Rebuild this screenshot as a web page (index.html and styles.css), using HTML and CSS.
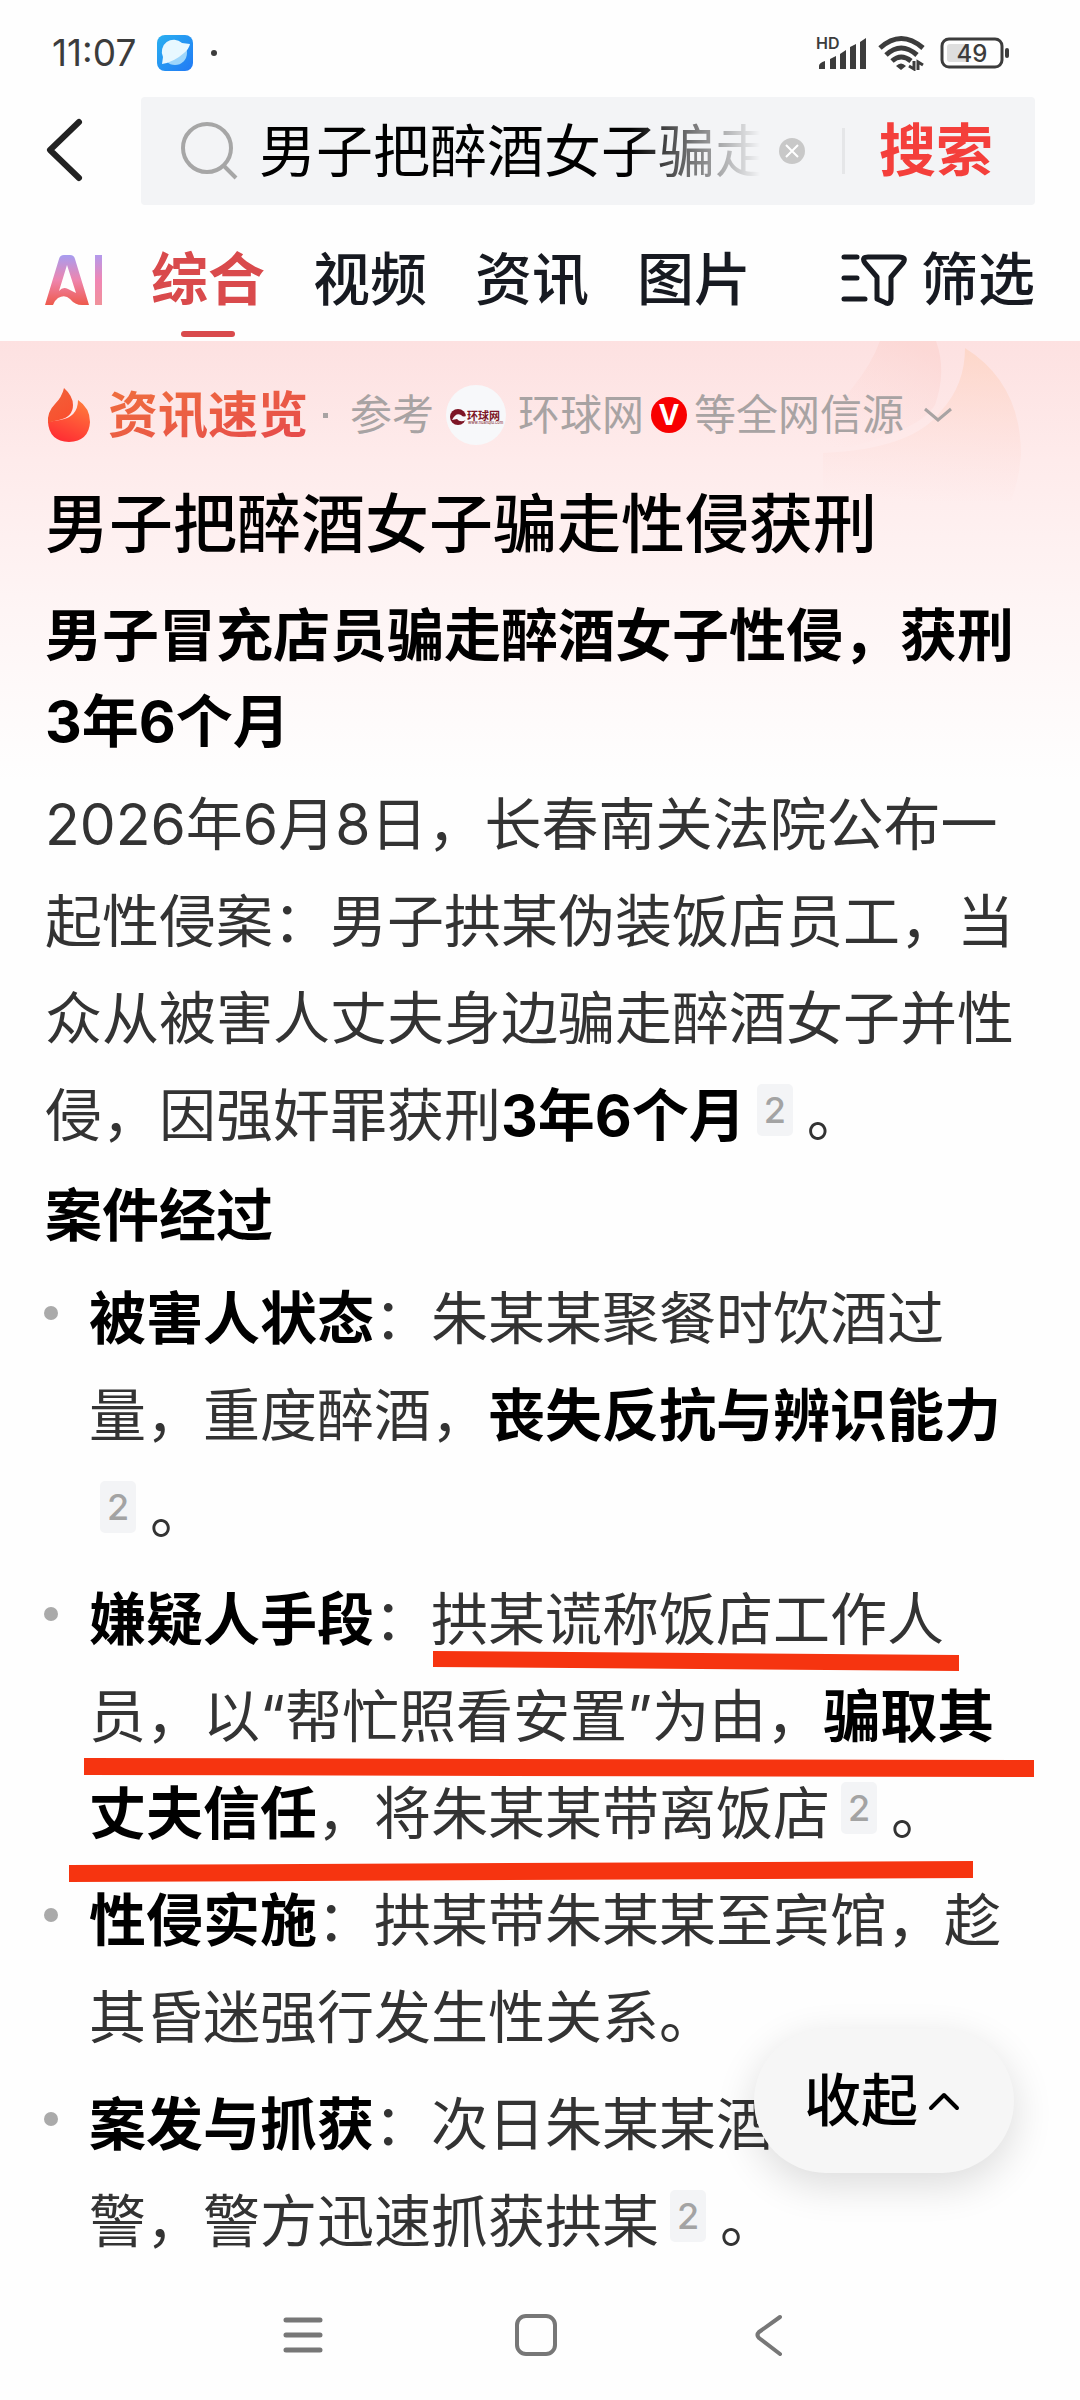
FILE: index.html
```html
<!DOCTYPE html>
<html lang="zh-CN">
<head>
    <meta charset="UTF-8">
    <meta name="viewport" content="width=device-width, initial-scale=1.0">
    <title>搜索结果</title>
    <link rel="stylesheet" href="styles.css">
</head>
<body>
    <div class="status-bar">
        <span class="time">11:07</span>
        <svg class="app-icon" viewBox="0 0 36 36" width="36" height="36">
            <defs>
                <linearGradient id="appBg" x1="0" y1="0" x2="1" y2="1">
                    <stop offset="0" stop-color="#2ab0f0"/>
                    <stop offset="1" stop-color="#2079f5"/>
                </linearGradient>
            </defs>
            <rect width="36" height="36" rx="8" fill="url(#appBg)"/>
            <circle cx="18" cy="18" r="12" fill="#9dd6fb"/>
            <path d="M6 22A12 12 0 0 1 25 8L33 9Q32 14 27 18Q17 27 5 29Z" fill="#e8f8ff"/>
        </svg>
        <span class="dot"></span>
        <svg class="signal" viewBox="0 0 52 34" width="52" height="34" fill="#3c3c3c">
            <text x="0" y="13" class="hd">HD</text>
            <path d="M3 33V30Q3 27 9 25V33ZM14 33V23L20 20V33ZM24 33V18L30 14V33ZM34 33V11L40 8V33ZM44 33V6L50 2V33Z"/>
        </svg>
        <svg class="wifi" viewBox="0 0 48 36" width="48" height="36" fill="none" stroke="#3c3c3c" stroke-width="5">
            <path d="M2 13Q23-6 45 13"/>
            <path d="M8 20Q23 6 39 20"/>
            <path d="M14 26Q23 18 33 26"/>
            <path d="M18 31Q23 26 28 31L23 35Z" fill="#3c3c3c" stroke="none"/>
            <path d="M36 26V34L31 31M40 35V27L45 30" stroke-width="3"/>
        </svg>
        <svg class="battery" viewBox="0 0 70 32" width="70" height="32">
            <rect x="2" y="2" width="60" height="28" rx="7" fill="none" stroke="#3c3c3c" stroke-width="3"/>
            <rect x="7" y="7" width="22" height="18" rx="3" fill="#dedede"/>
            <rect x="65" y="11" width="4" height="10" rx="2" fill="#3c3c3c"/>
            <text x="32" y="25" text-anchor="middle" class="level">49</text>
        </svg>
    </div>

    <header class="search-header">
        <button class="back" aria-label="返回">
            <svg viewBox="0 0 40 68" width="40" height="68" fill="none" stroke="#222" stroke-width="6" stroke-linecap="round" stroke-linejoin="round">
                <path d="M34 5L5 33L34 61"/>
            </svg>
        </button>
        <form class="search-box">
            <svg viewBox="0 0 58 60" width="58" height="60" fill="none" stroke="#a6a6a6" stroke-width="4">
                <circle cx="26" cy="27" r="24"/>
                <path d="M43 45L55 57"/>
            </svg>
            <input class="search-input" type="text" aria-label="搜索内容" value="男子把醉酒女子骗走性侵获刑">
            <button class="clear" type="button" aria-label="清除">
                <svg viewBox="0 0 28 28" width="28" height="28">
                    <circle cx="14" cy="14" r="13" fill="#c8c8c8"/>
                    <path d="M8 8L20 20M20 8L8 20" stroke="#fff" stroke-width="2"/>
                </svg>
            </button>
            <span class="divider"></span>
            <button class="search-btn" type="button">搜索</button>
        </form>
    </header>

    <nav class="tabs">
        <a href="#" class="tab-ai" aria-label="AI">
            <svg viewBox="0 0 58 50" width="58" height="50">
                <defs>
                    <linearGradient id="aiFill" x1="0" y1="0" x2="0" y2="1">
                        <stop offset="0" stop-color="#a79df0"/>
                        <stop offset="0.5" stop-color="#ee85ae"/>
                        <stop offset="1" stop-color="#ee5a4c"/>
                    </linearGradient>
                    <linearGradient id="aiBar" x1="0" y1="0" x2="0" y2="1">
                        <stop offset="0" stop-color="#b39aec"/>
                        <stop offset="0.5" stop-color="#f086b4"/>
                        <stop offset="1" stop-color="#f0929a"/>
                    </linearGradient>
                </defs>
                <path d="M0 50L14 4Q15 0 19 0H25Q29 0 30 4L44 50H37Q30 50 25 44Q20 39 13 43Q9 46 8 50ZM14 36Q18 31 23 34L31 38L22 10Z" fill="url(#aiFill)" fill-rule="evenodd"/>
                <path d="M50 0H57V50H50Z" fill="url(#aiBar)"/>
            </svg>
        </a>
        <a href="#" class="tab active">综合</a>
        <a href="#" class="tab">视频</a>
        <a href="#" class="tab">资讯</a>
        <a href="#" class="tab">图片</a>
        <button class="filter">
            <svg viewBox="0 0 66 54" width="66" height="54" fill="none" stroke="#171a21" stroke-width="5" stroke-linecap="round" stroke-linejoin="round">
                <path d="M3 4H16M3 25H16M3 46H24"/>
                <path d="M27 4H58Q66 4 62 10L50 24V46Q49 53 43 49L36 46V24L24 10Q20 4 27 4Z"/>
            </svg>
            筛选
        </button>
    </nav>

    <main class="card">
        <svg class="flame-bg" viewBox="0 0 200 160" width="200" height="160">
            <defs>
                <linearGradient id="bgLeft" x1="0.7" y1="0" x2="0.2" y2="1">
                    <stop offset="0" stop-color="#fbcfca" stop-opacity="0.5"/>
                    <stop offset="1" stop-color="#fddcda" stop-opacity="0"/>
                </linearGradient>
                <linearGradient id="bgRight" x1="0.5" y1="0" x2="0.4" y2="1">
                    <stop offset="0" stop-color="#fdd3c0" stop-opacity="0.7"/>
                    <stop offset="1" stop-color="#fdd9d8" stop-opacity="0"/>
                </linearGradient>
            </defs>
            <path d="M57 0H113Q124 30 112 64Q96 92 0 112Q6 76 30 46Q48 24 57 0Z" fill="url(#bgLeft)"/>
            <path d="M142 7Q198 42 198 114Q196 140 188 160H0V112Q90 108 118 70Q142 44 142 7Z" fill="url(#bgRight)"/>
        </svg>

        <div class="source">
            <svg viewBox="0 0 44 56" width="44" height="56">
                <defs>
                    <linearGradient id="fireA" x1="0" y1="0" x2="0.4" y2="1">
                        <stop offset="0" stop-color="#f0633a"/>
                        <stop offset="1" stop-color="#f9502f"/>
                    </linearGradient>
                    <linearGradient id="fireB" x1="0.8" y1="0" x2="0.4" y2="1">
                        <stop offset="0" stop-color="#ff7d3c"/>
                        <stop offset="1" stop-color="#ff2e33"/>
                    </linearGradient>
                </defs>
                <path d="M31 13Q43 21 43 35Q42 54 22 55Q2 54 1 35Q6 34 13 33Q31 30 31 13Z" fill="url(#fireB)"/>
                <path d="M17 1Q26 9 26 18Q26 30 12 33Q6 34 1 36Q0 25 8 17Q15 10 17 1Z" fill="url(#fireA)"/>
            </svg>
            <strong class="source-name">资讯速览</strong>
            <span class="sep"></span>
            <span>参考</span>
            <svg class="logo" viewBox="0 0 60 60" width="60" height="60">
                <circle cx="30" cy="30" r="30" fill="#f7f8fa"/>
                <circle cx="12" cy="32" r="8" fill="#7d1626"/>
                <path d="M6 35Q10 27 15 30Q18 33 21 30L20 35Q14 38 11 34Z" fill="#f7f8fa"/>
                <text x="21" y="35" class="logo-name">环球网</text>
                <text x="22" y="39" class="logo-url">www.huanqiu.com</text>
            </svg>
            <span>环球网</span>
            <span class="verified">V</span>
            <span>等全网信源</span>
            <svg class="more" viewBox="0 0 28 16" width="28" height="16" fill="none" stroke="#a8a3a3" stroke-width="3">
                <path d="M1 2L14 13L27 2"/>
            </svg>
        </div>

        <h1>男子把醉酒女子骗走性侵获刑</h1>
        <h2>男子冒充店员骗走醉酒女子性侵，获刑3年6个月</h2>
        <p>2026年6月8日，长春南关法院公布一起性侵案：男子拱某伪装饭店员工，当众从被害人丈夫身边骗走醉酒女子并性侵，因强奸罪获刑<b>3年6个月</b><a href="#" class="ref">2</a>。</p>
        <h3>案件经过</h3>
        <ul>
            <li><b>被害人状态</b>：朱某某聚餐时饮酒过量，重度醉酒，<b>丧失反抗与辨识能力</b><a href="#" class="ref">2</a>。</li>
            <li><b>嫌疑人手段</b>：拱某谎称饭店工作人员，以“帮忙照看安置”为由，<b>骗取其丈夫信任</b>，将朱某某带离饭店<a href="#" class="ref">2</a>。
                <!-- 手绘红色下划线 -->
                <svg class="marks" viewBox="0 0 1080 320" preserveAspectRatio="none" fill="#f63410">
                    <path d="M433 80L959 84V100L433 96Z"/>
                    <path d="M84 187L1034 189V206L84 204Z"/>
                    <path d="M69 294L973 290V307L69 311Z"/>
                </svg>
            </li>
            <li><b>性侵实施</b>：拱某带朱某某至宾馆，趁其昏迷强行发生性关系。</li>
            <li><b>案发与抓获</b>：次日朱某某酒醒后报警，警方迅速抓获拱某<a href="#" class="ref">2</a>。</li>
        </ul>
        <button class="collapse">
            收起
            <svg viewBox="0 0 32 20" width="32" height="20" fill="none" stroke="#000" stroke-width="4" stroke-linecap="round" stroke-linejoin="round">
                <path d="M3 17L16 4L29 17"/>
            </svg>
        </button>
    </main>

    <footer class="system-nav">
        <button aria-label="菜单">
            <svg viewBox="0 0 44 44" width="44" height="44" fill="none" stroke="#777" stroke-width="5" stroke-linecap="round">
                <path d="M5 7H39M5 22H39M5 37H39"/>
            </svg>
        </button>
        <button aria-label="主页">
            <svg viewBox="0 0 44 44" width="44" height="44" fill="none" stroke="#777" stroke-width="4">
                <rect x="3" y="3" width="38" height="38" rx="9"/>
            </svg>
        </button>
        <button aria-label="返回上一页">
            <svg viewBox="0 0 44 44" width="44" height="44" fill="none" stroke="#777" stroke-width="4" stroke-linecap="round" stroke-linejoin="round">
                <path d="M33 4L12 19Q9 22 12 25L33 41"/>
            </svg>
        </button>
    </footer>
</body>
</html>
```

FILE: styles.css
```css
* {
    box-sizing: border-box;
}
body {
    margin: 0;
    min-height: 100vh;
    display: flex;
    flex-direction: column;
    background: #fefefe;
    color: #333;
    font-family: Inter, "Noto Sans CJK SC", sans-serif;
    font-size: 57px;
}
svg {
    display: block;
    flex: none;
}
a {
    color: inherit;
    text-decoration: none;
}
button {
    padding: 0;
    border: none;
    background: none;
    color: inherit;
    font: inherit;
    cursor: pointer;
}
.status-bar {
    display: flex;
    align-items: center;
    height: 97px;
    padding: 8px 70px 0 52px;
}
.time {
    width: 89px;
    color: #3c3c3c;
    font-size: 37px;
    line-height: 44px;
}
.app-icon {
    margin-left: 16px;
}
.dot {
    width: 6px;
    height: 6px;
    margin-left: 18px;
    border-radius: 50%;
    background: #3c3c3c;
}
.signal {
    margin-left: auto;
}
.hd {
    font-size: 16px;
    font-weight: 600;
}
.wifi {
    margin: 0 14px 0 10px;
}
.level {
    fill: #3c3c3c;
    font-size: 24px;
    font-weight: 500;
}
.search-header {
    display: flex;
    align-items: center;
    gap: 56px;
    padding: 0 45px;
}
.search-box {
    flex: 1;
    min-width: 0;
    display: flex;
    align-items: center;
    height: 108px;
    padding: 0 42px 0 40px;
    border-radius: 4px;
    background: #f3f4f6;
}
.search-input {
    flex: 1;
    min-width: 0;
    height: 88px;
    margin: 0 18px 0 20px;
    padding: 0 0 8px;
    border: none;
    outline: none;
    background: none;
    color: #000;
    font: inherit;
    -webkit-mask-image: linear-gradient(to right, #000 74%, transparent 100%);
    mask-image: linear-gradient(to right, #000 74%, transparent 100%);
}
.divider {
    width: 3px;
    height: 46px;
    margin: 0 34px 0 36px;
    background: #e5e6e8;
}
.search-btn {
    color: #f43f3b;
    font-weight: 700;
    line-height: 84px;
}
.tabs {
    display: flex;
    align-items: center;
    gap: 48px;
    height: 136px;
    padding: 14px 45px 0;
    color: #171a21;
    font-weight: 500;
}
.tab {
    position: relative;
    line-height: 114px;
}
.tab.active {
    color: #d94a4c;
    font-weight: 700;
}
.tab.active::after {
    content: "";
    position: absolute;
    left: 50%;
    bottom: 0;
    width: 54px;
    height: 6px;
    margin-left: -27px;
    border-radius: 3px;
    background: #d94a4c;
}
.filter {
    display: flex;
    align-items: center;
    gap: 14px;
    margin-left: auto;
    line-height: 114px;
}
.card {
    position: relative;
    padding: 36px 60px 0 45px;
    background: linear-gradient(#fde1e1, #feebeb 120px, #fef5f5 270px, #fefefe 440px);
}
.flame-bg {
    position: absolute;
    top: 0;
    right: 57px;
}
.source {
    position: relative;
    display: flex;
    align-items: center;
    height: 76px;
    padding-left: 2px;
    color: #a8a3a3;
    font-size: 42px;
    line-height: 60px;
}
.source-name {
    margin-left: 17px;
    font-size: 50px;
    background: linear-gradient(to bottom right, #f0703c, #e5484d);
    -webkit-background-clip: text;
    background-clip: text;
    color: transparent;
}
.sep {
    width: 5px;
    height: 5px;
    margin: 0 22px 0 15px;
    background: #a8a3a3;
}
.logo {
    margin: 0 12px;
}
.logo-name {
    fill: #7d1626;
    font-size: 11px;
    font-weight: 700;
}
.logo-url {
    fill: #7d1626;
    font-size: 4px;
}
.verified {
    width: 36px;
    height: 36px;
    margin: 0 7px;
    border-radius: 50%;
    background: #f80000;
    color: #fff;
    font-size: 28px;
    font-weight: 700;
    line-height: 36px;
    text-align: center;
}
.more {
    margin-left: 20px;
}
h1, h2, h3, b {
    color: #000;
}
h1, h2, h3, p, ul {
    margin: 0;
}
h1 {
    margin-top: 23px;
    font-size: 64px;
    font-weight: 500;
    line-height: 96px;
}
h2 {
    margin-top: 21px;
    font-size: 57px;
    line-height: 86px;
}
p {
    margin-top: 11px;
    line-height: 97px;
}
h3 {
    margin-top: 9px;
    font-size: 57px;
    line-height: 86px;
}
ul {
    display: flex;
    flex-direction: column;
    gap: 10px;
    margin-top: 11px;
    padding: 0;
    list-style: none;
}
li {
    position: relative;
    padding-left: 44px;
    line-height: 97px;
}
li::before {
    content: "";
    position: absolute;
    top: 36px;
    left: -1px;
    width: 14px;
    height: 14px;
    border-radius: 50%;
    background: #aaa;
}
.ref {
    display: inline-block;
    width: 36px;
    height: 52px;
    margin: 0 14px 0 11px;
    border-radius: 5px;
    background: #f3f4f6;
    color: #a3a3a3;
    font-size: 36px;
    font-weight: 500;
    line-height: 52px;
    text-align: center;
    vertical-align: 13px;
}
.marks {
    position: absolute;
    top: 0;
    left: -45px;
    width: 100vw;
    height: 320px;
    pointer-events: none;
}
.collapse {
    position: absolute;
    right: 66px;
    bottom: 97px;
    display: flex;
    align-items: center;
    justify-content: center;
    gap: 10px;
    width: 260px;
    height: 144px;
    padding-right: 4px;
    border-radius: 72px;
    background: #f6f6f6;
    box-shadow: 0 12px 40px rgba(0, 0, 0, 0.14);
    color: #000;
    font-weight: 500;
    line-height: 84px;
}
.system-nav {
    display: flex;
    justify-content: center;
    gap: 189px;
    margin-top: auto;
    padding: 0 8px 43px 0;
}
```
